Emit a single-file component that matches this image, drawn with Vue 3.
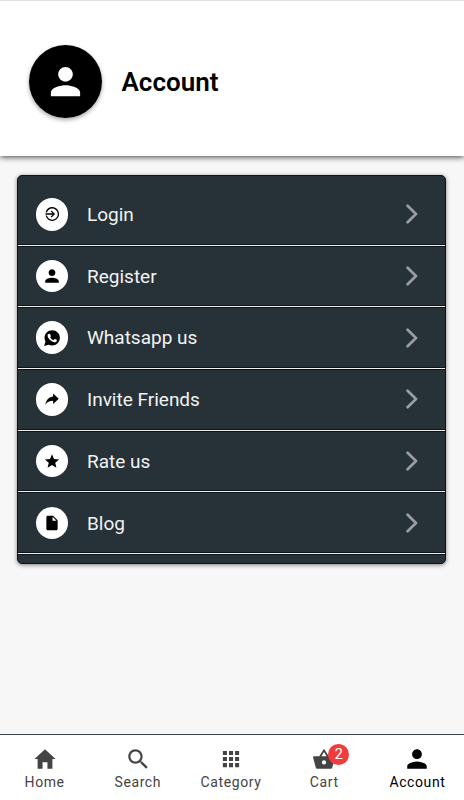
<script setup>
const icons = {
  login: 'M73 238h201l-55-55 25-25 98 98-98 98-25-25 55-55H73zM112 211C130 144 189 96 260 96c88 0 160 72 160 160s-72 160-160 160c-71 0-130-48-148-115h-37c19 87 95 151 185 151 108 0 196-88 196-196S368 60 260 60C170 60 94 124 75 211z',
  person: 'M256 256c52.805 0 96-43.201 96-96s-43.195-96-96-96-96 43.201-96 96 43.195 96 96 96zm0 48c-63.598 0-192 32.402-192 96v48h384v-48c0-63.598-128.402-96-192-96z',
  whatsapp: 'M260 32C141 32 44 128 44 247c0 38 10 74 27 105L32 480l132-35c29 15 61 23 96 23 119 0 220-98 220-221S379 32 260 32zM181 136c9 0 17 0 22 13l20 48c3 9-13 27-20 35 22 43 52 69 94 88l28-33c4-5 8-5 14-2l48 24c9 5 8 11 5 24-5 30-38 46-61 46-89-7-189-97-201-184-1-25 14-59 51-59z',
  share: 'M448 248L288 96v85.334C138.666 202.667 85.333 309.334 64 416c53.333-74.666 117.333-108.802 224-108.802v87.469z',
  star: 'M256 372.686L380.83 448l-33.021-142.066L458 210.409l-145.267-12.475L256 64l-56.743 133.934L54 210.409l110.192 95.525L131.161 448z',
  document: 'M288 48H136c-22.092 0-40 17.908-40 40v336c0 22.092 17.908 40 40 40h240c22.092 0 40-17.908 40-40V176zm-16 144V80l112 112z',
  home: 'M208 448V320h96v128h97.6V256H464L256 64 48 256h62.4v192z',
  search: 'M337.509 305.372h-17.501l-6.571-5.486c20.791-25.232 33.922-57.054 33.922-93.257C347.358 127.632 283.896 64 205.135 64 127.452 64 64 127.632 64 206.629s63.452 142.628 142.225 142.628c35.011 0 67.831-13.167 92.991-34.008l6.561 5.487v17.551L415.18 448 448 415.086zm-131.284 0c-54.702 0-98.463-43.887-98.463-98.743 0-54.858 43.761-98.742 98.463-98.742 54.7 0 98.462 43.884 98.462 98.742 0 54.856-43.762 98.743-98.462 98.743z',
  grid: 'M96 96h80v80H96zm120 0h80v80h-80zm120 0h80v80h-80zM96 216h80v80H96zm120 0h80v80h-80zm120 0h80v80h-80zM96 336h80v80H96zm120 0h80v80h-80zm120 0h80v80h-80z',
  basket: 'M350 202L270 72c-7-11-21-11-28 0l-80 130H58c-14 0-20 12-16 25l51 195c4 17 16 26 33 26h260c17 0 29-9 33-26l51-195c4-13-2-25-16-25zM205 202l51-84 51 84zm51 164a42 42 0 1 1 0-84 42 42 0 0 1 0 84z'
}

const rows = [
  { label: 'Login', icon: 'login' },
  { label: 'Register', icon: 'person' },
  { label: 'Whatsapp us', icon: 'whatsapp' },
  { label: 'Invite Friends', icon: 'share' },
  { label: 'Rate us', icon: 'star' },
  { label: 'Blog', icon: 'document' }
]

const tabs = [
  { label: 'Home', icon: 'home' },
  { label: 'Search', icon: 'search' },
  { label: 'Category', icon: 'grid' },
  { label: 'Cart', icon: 'basket', badge: 2 },
  { label: 'Account', icon: 'person', active: true }
]
</script>

<template>
  <div class="screen">
    <header class="header">
      <div class="avatar">
        <svg viewBox="0 0 512 512"><path :d="icons.person" /></svg>
      </div>
      <h1>Account</h1>
    </header>
    <main>
      <ul class="card">
        <li v-for="row in rows" :key="row.label" class="row">
          <span class="bullet">
            <svg viewBox="0 0 512 512"><path :d="icons[row.icon]" fill-rule="evenodd" /></svg>
          </span>
          <span class="label">{{ row.label }}</span>
          <svg class="chevron" viewBox="0 0 12 20"><path d="M1.600 1.800L10 10l-8.400 8.200" /></svg>
        </li>
      </ul>
    </main>
    <nav class="tabs">
      <a v-for="tab in tabs" :key="tab.label" class="tab" :class="{ active: tab.active }">
        <span class="tab-icon">
          <svg viewBox="0 0 512 512"><path :d="icons[tab.icon]" fill-rule="evenodd" /></svg>
          <span v-if="tab.badge" class="badge">{{ tab.badge }}</span>
        </span>
        <span class="tab-label">{{ tab.label }}</span>
      </a>
    </nav>
  </div>
</template>

<style>
body {
  margin: 0;
  background: #f7f7f7;
}
</style>

<style scoped>
.screen {
  height: 800px;
  display: flex;
  flex-direction: column;
  background: #f7f7f7;
  font-family: Roboto, "Liberation Sans", sans-serif;
  overflow: hidden;
}
.header {
  box-sizing: border-box;
  height: 156px;
  flex: none;
  display: flex;
  align-items: center;
  gap: 19.500px;
  padding: 5px 29px 0;
  border-top: 1px solid #e2e2e2;
  background: #fff;
  box-shadow: 0 1px 6px rgba(0, 0, 0, 0.75);
}
.avatar {
  width: 73px;
  height: 73px;
  border-radius: 50%;
  background: #000;
  display: flex;
  align-items: center;
  justify-content: center;
  box-shadow: 0 2px 4px rgba(0, 0, 0, 0.35);
}
.avatar svg {
  width: 39px;
  height: 39px;
  fill: #fff;
}
h1 {
  margin: 1px 0 0;
  font-size: 26px;
  line-height: 32px;
  font-weight: 600;
  color: #000;
}
main {
  flex: 1;
  padding: 19px 18.500px 0 16.500px;
}
.card {
  box-sizing: border-box;
  height: 389px;
  margin: 0;
  padding: 8px 0 0;
  list-style: none;
  border: 1px solid #0c1319;
  border-radius: 5px;
  background: #263238;
  box-shadow: 0 1px 4px rgba(0, 0, 0, 0.5);
  overflow: hidden;
}
.row {
  box-sizing: border-box;
  height: 61.700px;
  display: flex;
  align-items: center;
  padding: 0 26.500px 0 18px;
  border-bottom: 1px solid #f0f0f0;
  box-shadow: inset 0 -1px #0c1319, 0 1px #0c1319;
}
.bullet {
  width: 32.500px;
  height: 32.500px;
  border-radius: 50%;
  background: #fff;
  display: flex;
  align-items: center;
  justify-content: center;
}
.bullet svg {
  width: 18px;
  height: 18px;
}
.label {
  flex: 1;
  margin-left: 19px;
  padding-top: 1.500px;
  font-size: 19px;
  line-height: 24px;
  color: #f3f3f3;
}
.chevron {
  width: 12px;
  height: 20px;
  fill: none;
  stroke: #9a9ca5;
  stroke-width: 2.700;
  stroke-linecap: round;
  stroke-linejoin: round;
}
.tabs {
  box-sizing: border-box;
  height: 66px;
  flex: none;
  display: flex;
  margin-left: -2px;
  border-top: 1px solid #3c444a;
  background: #fff;
}
.tab {
  flex: 1;
  display: flex;
  flex-direction: column;
  align-items: center;
  padding-top: 11px;
  color: #444;
}
.tab.active {
  color: #000;
}
.tab-icon {
  position: relative;
  height: 26px;
}
.tab-icon svg {
  display: block;
  width: 26px;
  height: 26px;
  fill: currentColor;
}
.badge {
  position: absolute;
  left: 17px;
  top: -2px;
  width: 21px;
  height: 21px;
  border-radius: 11px;
  background: #f23b3b;
  color: #fff;
  font-size: 15px;
  line-height: 21px;
  text-align: center;
}
.tab-label {
  margin-top: 1px;
  font-size: 14px;
  line-height: 18px;
  letter-spacing: 0.600px;
}
</style>
